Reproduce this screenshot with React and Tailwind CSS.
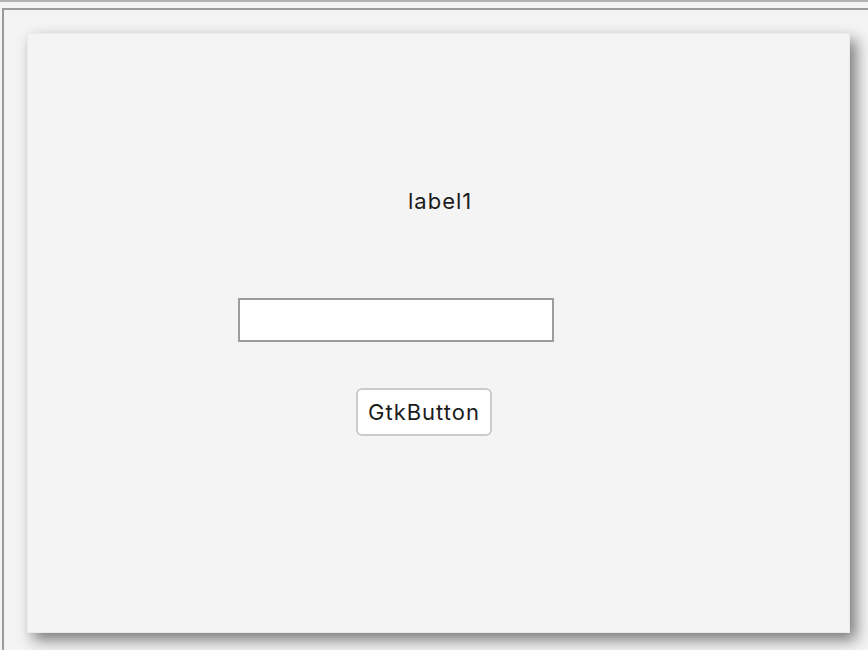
export default function App() {
  return (
    <div className="h-[650px] w-full overflow-hidden bg-[#f4f4f4]" style={{ fontFamily: "Inter, 'Liberation Sans', sans-serif" }}>
      <div className="h-[2px] bg-[#b3b3b3]" />
      <div className="ml-[2px] mt-[6px] h-[700px] border-l-2 border-t-2 border-[#9b9b9b]">
        <div className="ml-[23px] mt-[23px] h-[600px] w-[823px] border border-[#ebebeb] bg-[#f4f4f4] shadow-[6px_7px_14px_rgba(0,0,0,0.5)]">
          <div className="ml-[380px] mt-[153px] h-[28px] text-[22px] leading-[28px] tracking-[1px] text-[#1c1c1c]">label1</div>
          <input
            type="text"
            className="ml-[210px] mt-[83px] block h-[44px] w-[316px] border-2 border-[#9c9c9c] bg-white outline-none"
          />
          <button className="ml-[328px] mt-[46px] block h-[48px] w-[136px] rounded-[6px] border-2 border-[#cccccc] bg-white text-[22px] tracking-[1px] text-[#1c1c1c]">
            GtkButton
          </button>
        </div>
      </div>
    </div>
  );
}
